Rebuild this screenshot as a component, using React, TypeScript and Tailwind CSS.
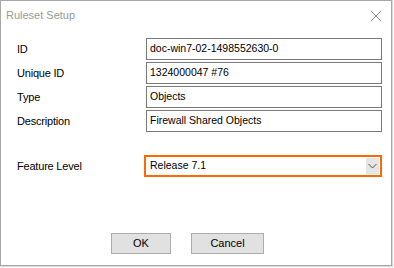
import React from "react";

const Field = ({ label, value }: { label: string; value: string }) => (
  <div className="flex items-center h-[22px]">
    <div className="w-[145px] pl-[16px] text-[11px] tracking-[-0.2px] text-black">{label}</div>
    <div className="w-[236px] h-[22px] border border-[#7a7a7a] flex items-center pl-[3px] text-[10.5px] text-black bg-white">
      {value}
    </div>
  </div>
);

export default function App() {
  return (
    <div
      className="w-[394px] h-[268px] bg-white relative overflow-hidden"
      style={{ fontFamily: '"Liberation Sans", Arial, sans-serif' }}
    >
      <div className="w-[393px] h-[267px] bg-[#d9d9d9] pr-px pb-px">
        <div className="w-[392px] h-[266px] border border-[#a8a8a8] bg-white flex flex-col">
          <div className="h-[29px] flex items-center justify-between pl-[5px] pr-[9px]">
            <span className="text-[11px] text-[#9a9a9a]">Ruleset Setup</span>
            <svg width="12" height="12" viewBox="0 0 12 12">
              <path d="M1 1 L11 11 M11 1 L1 11" stroke="#8a8a8a" strokeWidth="1" />
            </svg>
          </div>
          <div className="flex flex-col gap-[2px] mt-[8px]">
            <Field label="ID" value="doc-win7-02-1498552630-0" />
            <Field label="Unique ID" value="1324000047 #76" />
            <Field label="Type" value="Objects" />
            <Field label="Description" value="Firewall Shared Objects" />
          </div>
          <div className="flex items-center mt-[23px] h-[22px]">
            <div className="w-[143px] pl-[16px] text-[11px] tracking-[-0.2px] text-black">Feature Level</div>
            <div className="w-[238px] h-[22px] border-2 border-[#ff6a00] flex items-center justify-between pl-[4px] pr-[1px] text-[10.5px] text-black">
              <span>Release 7.1</span>
              <div className="w-[13px] h-[16px] bg-[#e5e5e5] flex items-center justify-center">
                <svg width="9" height="6" viewBox="0 0 9 6">
                  <path d="M0.5 1 L4.5 5 L8.5 1" stroke="#555" strokeWidth="1" fill="none" />
                </svg>
              </div>
            </div>
          </div>
          <div className="flex justify-center gap-[20px] mt-[56px] pr-[17px]">
            <button className="w-[60px] h-[21px] bg-[#e1e1e1] border border-[#adadad] text-[11px] text-black">
              OK
            </button>
            <button className="w-[73px] h-[21px] bg-[#e1e1e1] border border-[#adadad] text-[11px] text-black">
              Cancel
            </button>
          </div>
        </div>
      </div>
    </div>
  );
}
